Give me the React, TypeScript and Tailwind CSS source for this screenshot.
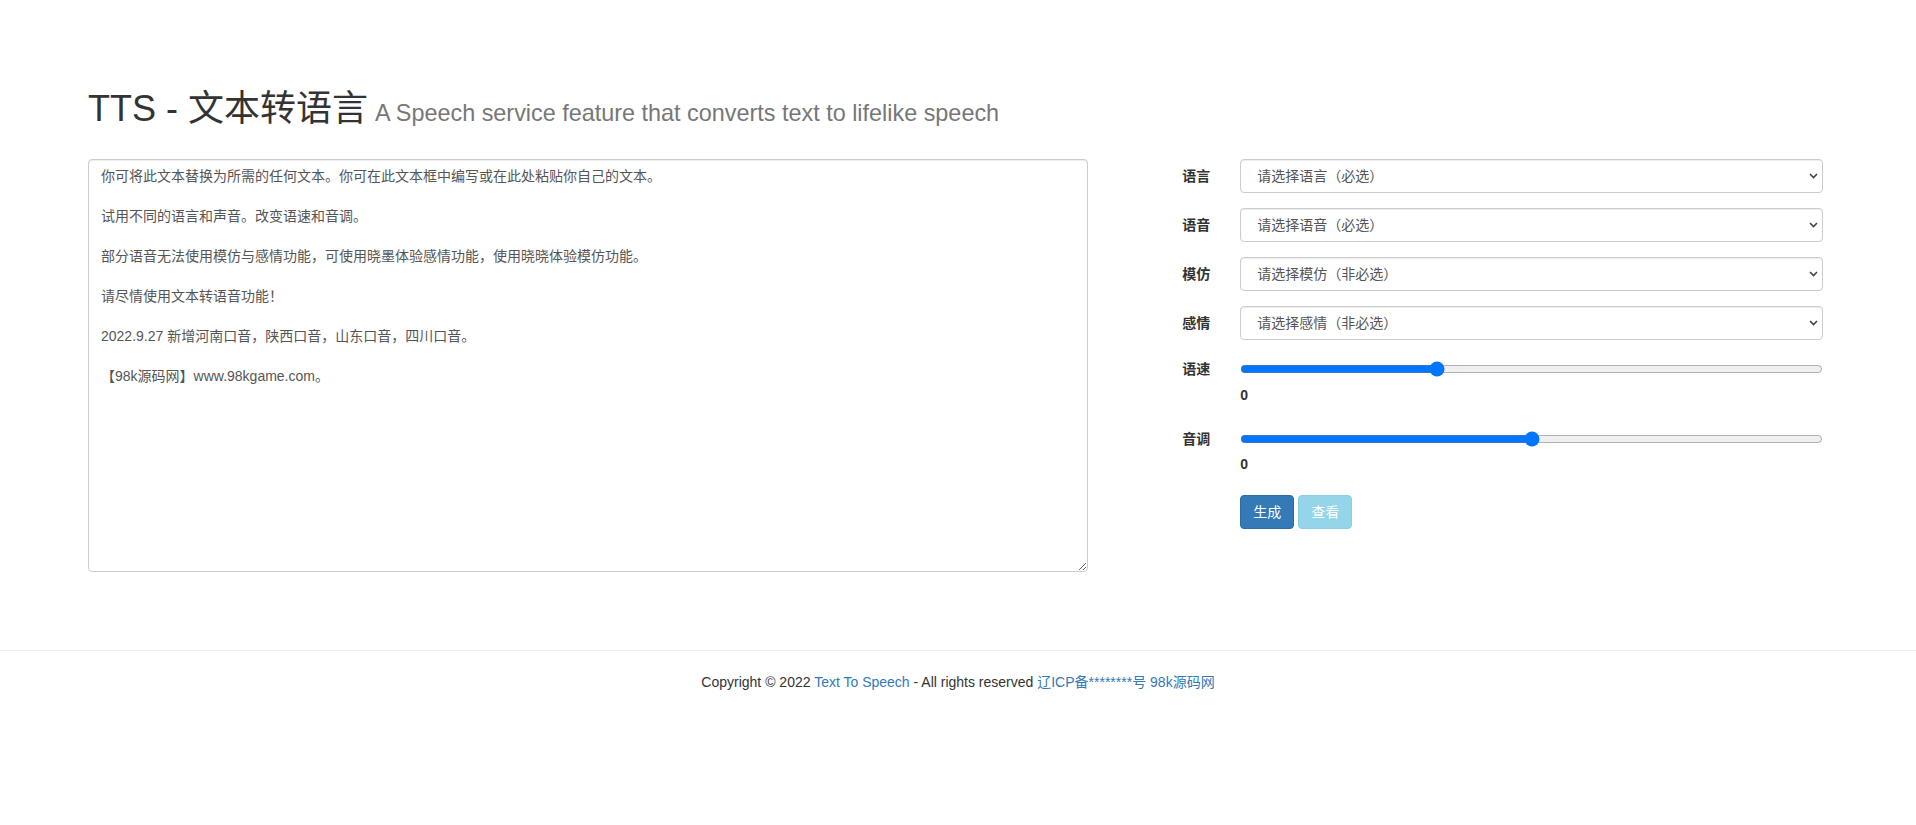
import { useState } from 'react'

const TEXT = [
  '你可将此文本替换为所需的任何文本。你可在此文本框中编写或在此处粘贴你自己的文本。',
  '试用不同的语言和声音。改变语速和音调。',
  '部分语音无法使用模仿与感情功能，可使用晓墨体验感情功能，使用晓晓体验模仿功能。',
  '请尽情使用文本转语音功能！',
  '2022.9.27 新增河南口音，陕西口音，山东口音，四川口音。',
  '【98k源码网】www.98kgame.com。',
].join('\n\n')

const SELECTS = [
  { label: '语言', placeholder: '请选择语言（必选）' },
  { label: '语音', placeholder: '请选择语音（必选）' },
  { label: '模仿', placeholder: '请选择模仿（非必选）' },
  { label: '感情', placeholder: '请选择感情（非必选）' },
]

export default function App() {
  const [speed, setSpeed] = useState(0)
  const [pitch, setPitch] = useState(0)

  return (
    <div className="min-h-[825px] bg-white font-['Liberation_Sans','Noto_Sans_CJK_SC',sans-serif] text-[14px] leading-[20px] text-[#333]">
      <div className="pl-[73px] pr-[78px]">
        <h1 className="px-[15px] pt-[89px] mb-[30px] text-[36px] leading-[1.1] font-normal text-[#333]">
          TTS - 文本转语言<small className="ml-[7px] text-[65%] font-normal leading-none text-[#777]">A Speech service feature that converts text to lifelike speech</small>
        </h1>

        <div className="flex">
          <div className="w-7/12 px-[15px]">
            <textarea
              defaultValue={TEXT}
              className="block w-full h-[413px] border border-[#ccc] rounded-[4px] px-[12px] py-[6px] text-[14px] leading-[20px] text-[#555] bg-white shadow-[inset_0_1px_1px_rgba(0,0,0,0.075)] outline-none"
            />
          </div>

          <div className="w-5/12 px-[15px]">
            {SELECTS.map(s => (
              <div key={s.label} className="flex mb-[15px]">
                <label className="w-[92.6px] shrink-0 pt-[7px] text-right font-bold">{s.label}</label>
                <div className="relative ml-[30px] flex-1">
                  <select className="block w-full h-[34px] appearance-none border border-[#ccc] rounded-[4px] pl-[16px] pr-[30px] text-[14px] text-[#555] bg-white shadow-[inset_0_1px_1px_rgba(0,0,0,0.075)] outline-none">
                    <option>{s.placeholder}</option>
                  </select>
                  <svg className="pointer-events-none absolute right-[5px] top-[14px]" width="9" height="6" viewBox="0 0 9 6" fill="none">
                    <polyline points="1,1 4.5,4.5 8,1" stroke="#444" strokeWidth="1.6" />
                  </svg>
                </div>
              </div>
            ))}

            <div className="flex mb-[19px]">
              <label className="w-[92.6px] shrink-0 pt-[4px] text-right font-bold">语速</label>
              <div className="ml-[30px] flex-1">
                <input
                  type="range" min={-100} max={200} value={speed}
                  onChange={e => setSpeed(Number(e.target.value))}
                  className="block w-full h-4 m-0 mt-[6px] accent-[#0075ff]"
                />
                <div className="mt-[8px] font-bold">{speed}</div>
              </div>
            </div>

            <div className="flex mb-[21px]">
              <label className="w-[92.6px] shrink-0 pt-[5px] text-right font-bold">音调</label>
              <div className="ml-[30px] flex-1">
                <input
                  type="range" min={-50} max={50} value={pitch}
                  onChange={e => setPitch(Number(e.target.value))}
                  className="block w-full h-4 m-0 mt-[7px] accent-[#0075ff]"
                />
                <div className="mt-[7px] font-bold">{pitch}</div>
              </div>
            </div>

            <div className="flex ml-[122.6px]">
              <button className="h-[34px] px-[12px] border border-[#2e6da4] rounded-[4px] bg-[#337ab7] text-white text-[14px]">生成</button>
              <button disabled className="ml-[4px] h-[34px] px-[12px] border border-[#46b8da] rounded-[4px] bg-[#5bc0de] text-white text-[14px] opacity-65 cursor-not-allowed">查看</button>
            </div>
          </div>
        </div>
      </div>

      <footer className="mt-[78px] border-t border-[#eee] pt-[21px] text-center">
        Copyright © 2022 <a href="#" className="text-[#337ab7]">Text To Speech</a> - All rights reserved <a href="#" className="text-[#337ab7]">辽ICP备********号</a> <a href="#" className="text-[#337ab7]">98k源码网</a>
      </footer>
    </div>
  )
}
